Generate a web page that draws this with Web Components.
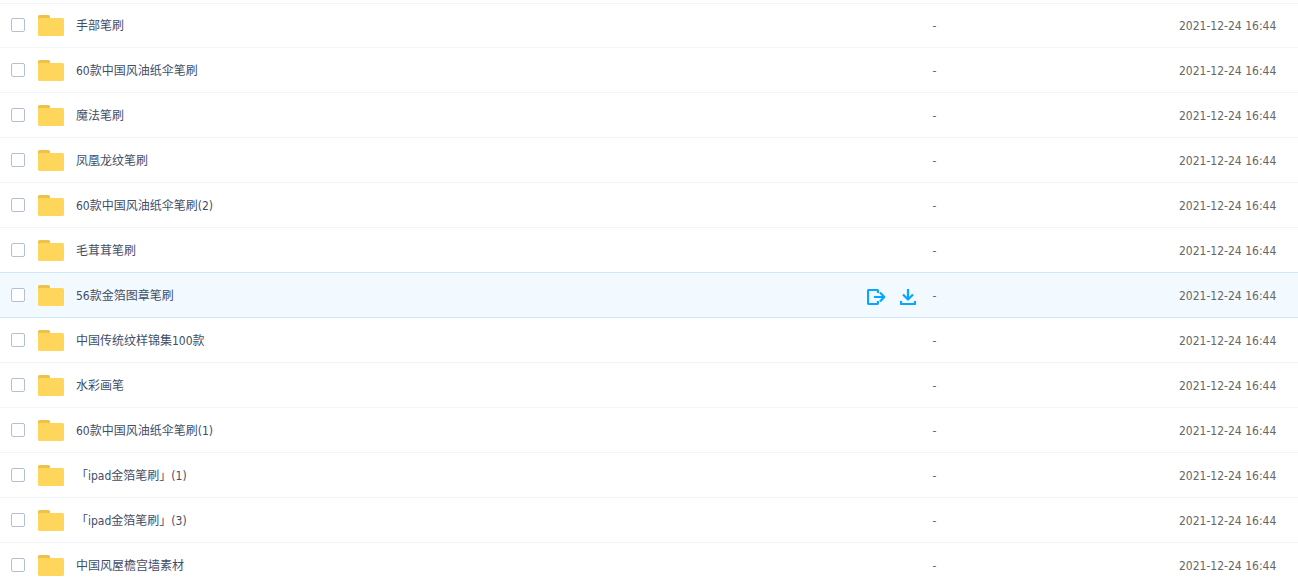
<!DOCTYPE html>
<html lang="zh-CN">
<head>
<meta charset="utf-8">
<title>文件列表</title>
<style>
    html{
        overflow-x: hidden;
    }
    body{
        margin: 0;
        padding-top: 3px;
        background: #fff;
        color: #424e67;
        font: 12px/18px "DejaVu Sans Condensed", "Noto Sans CJK SC", sans-serif;
    }
</style>
</head>
<body>
<file-list></file-list>
<script>
const files = [
    "手部笔刷",
    "60款中国风油纸伞笔刷",
    "魔法笔刷",
    "凤凰龙纹笔刷",
    "60款中国风油纸伞笔刷(2)",
    "毛茸茸笔刷",
    "56款金箔图章笔刷",
    "中国传统纹样锦集100款",
    "水彩画笔",
    "60款中国风油纸伞笔刷(1)",
    "「ipad金箔笔刷」(1)",
    "「ipad金箔笔刷」(3)",
    "中国风屋檐宫墙素材"
];
const activeRow = 6;

class FolderIcon extends HTMLElement{
    constructor(){
        super();
        this.attachShadow({mode:"open"});
        this.shadowRoot.innerHTML= `
            <style>
                :host{
                    display: block;
                    width: 26px;
                    height: 21px;
                }
                svg{
                    display: block;
                }
            </style>
            <svg width="26" height="21" viewBox="0 0 26 21" aria-hidden="true">
                <path d="M0 5V1.500Q0 0 1.500 0H10.500Q12 0 12 1.500V5Z" fill="#eec14b"/>
                <rect y="3" width="26" height="18" rx="1.500" fill="#ffd65c"/>
            </svg>
        `;
    }
}
customElements.define('folder-icon', FolderIcon);

class FileName extends HTMLElement{
    constructor(){
        super();
        this.attachShadow({mode:"open"});
        this.shadowRoot.innerHTML= `
            <style>
                :host{
                    display: flex;
                    align-items: center;
                }
                input{
                    appearance: none;
                    box-sizing: border-box;
                    width: 14px;
                    height: 14px;
                    margin: 0 13px 0 0;
                    border: 1px solid #b4c0d1;
                    border-radius: 2px;
                    background: #fff;
                }
                input:checked{
                    background: #06a7ff;
                }
                a{
                    margin-left: 12px;
                    padding-top: 2px;
                    color: inherit;
                    text-decoration: none;
                }
            </style>
            <input type="checkbox">
            <folder-icon></folder-icon>
            <a href="#"><slot></slot></a>
        `;
    }
    connectedCallback(){
        this.shadowRoot.querySelector("input").setAttribute("aria-label", this.textContent);
    }
}
customElements.define('file-name', FileName);

class FileActions extends HTMLElement{
    constructor(){
        super();
        this.attachShadow({mode:"open"});
        this.shadowRoot.innerHTML= `
            <style>
                :host{
                    display: flex;
                    gap: 14px;
                    padding-top: 3px;
                }
                button{
                    padding: 0;
                    border: 0;
                    background: none;
                    color: #06a7ff;
                    cursor: pointer;
                }
                svg{
                    display: block;
                    fill: none;
                    stroke: currentColor;
                    stroke-width: 2.200;
                    stroke-linejoin: round;
                }
            </style>
            <button type="button" aria-label="保存">
                <svg width="19" height="16" viewBox="0 0 19 16">
                    <path d="M11 4V2Q11 1 10 1H2Q1 1 1 2V14Q1 15 2 15H10Q11 15 11 14V12M7 8H17M13 3.500L17.300 8L13 12.500"/>
                </svg>
            </button>
            <button type="button" aria-label="下载">
                <svg width="16" height="16" viewBox="0 0 16 16">
                    <path d="M8 0V10M3 5.500L8 10.500L13 5.500M1 12V15H15V12"/>
                </svg>
            </button>
        `;
    }
}
customElements.define('file-actions', FileActions);

class FileList extends HTMLElement{
    constructor(){
        super();
        this.attachShadow({mode:"open"});
    }
    getRow(name, index){
        const active = index === activeRow;
        return `
            <tr class="${active ? "active" : ""}">
                <td>
                    <div class="cell">
                        <file-name>${name}</file-name>
                        ${active ? "<file-actions></file-actions>" : ""}
                    </div>
                </td>
                <td class="size">-</td>
                <td class="date">2021-12-24 16:44</td>
            </tr>
        `;
    }
    getStyle(){
        return `
        <style>
            :host{
                display: block;
            }
            table{
                width: 100%;
                table-layout: fixed;
                border-spacing: 0;
            }
            td{
                box-sizing: border-box;
                height: 45px;
                padding: 0;
                border-bottom: 1px solid #f1f5fa;
            }
            td:first-child{
                padding-left: 11px;
            }
            tr:first-child td{
                box-shadow: inset 0 1px #f1f5fa;
            }
            tr.active td{
                background: #f2faff;
            }
            tr.active td,
            tr:has(+ .active) td{
                border-color: #d0e9f8;
            }
            .cell{
                display: flex;
                align-items: center;
                justify-content: space-between;
                padding-right: 16px;
            }
            .name-col{
                width: auto;
            }
            .size-col{
                width: 19%;
            }
            .date-col{
                width: 119px;
            }
            .size,
            .date{
                padding-top: 2px;
                color: #666;
                white-space: nowrap;
            }
        </style>
        `;
    }
    connectedCallback(){
        this.shadowRoot.innerHTML= `
            ${this.getStyle()}
            <table>
                <colgroup>
                    <col class="name-col">
                    <col class="size-col">
                    <col class="date-col">
                </colgroup>
                <tbody>${files.map((name, i) => this.getRow(name, i)).join("")}</tbody>
            </table>
        `;
    }
}
customElements.define('file-list', FileList);
</script>
</body>
</html>
